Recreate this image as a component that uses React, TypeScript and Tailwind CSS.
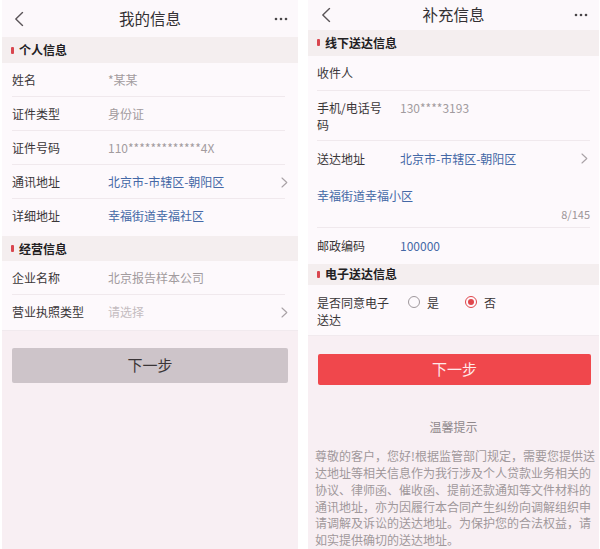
import type { ReactNode } from "react";

const personal = [
  { label: "姓名", value: "*某某", tone: "gray" },
  { label: "证件类型", value: "身份证", tone: "gray" },
  { label: "证件号码", value: "110*************4X", tone: "gray" },
  { label: "通讯地址", value: "北京市-市辖区-朝阳区", tone: "blue", arrow: true },
  { label: "详细地址", value: "幸福街道幸福社区", tone: "blue" },
];

const business = [
  { label: "企业名称", value: "北京报告样本公司", tone: "gray" },
  { label: "营业执照类型", value: "请选择", tone: "placeholder", arrow: true },
];

const toneClass: Record<string, string> = {
  gray: "text-[#a29b9e]",
  blue: "text-[#4468a6]",
  placeholder: "text-[#c4bcc0]",
};

function BackIcon() {
  return (
    <svg width="10" height="15" viewBox="0 0 10 15" fill="none">
      <path d="M8.5 1 L1.8 7.5 L8.5 14" stroke="#5a5558" strokeWidth="1.4" strokeLinecap="round" strokeLinejoin="round" />
    </svg>
  );
}

function MoreIcon() {
  return (
    <svg width="14" height="4" viewBox="0 0 14 4">
      <circle cx="2" cy="2" r="1.3" fill="#4a4649" />
      <circle cx="7" cy="2" r="1.3" fill="#4a4649" />
      <circle cx="12" cy="2" r="1.3" fill="#4a4649" />
    </svg>
  );
}

function Chevron() {
  return (
    <svg width="7" height="11" viewBox="0 0 7 11" fill="none">
      <path d="M1 1 L5.8 5.5 L1 10" stroke="#a9a2a6" strokeWidth="1.1" strokeLinecap="round" strokeLinejoin="round" />
    </svg>
  );
}

function TopBar({ title, height, left, right }: { title: string; height: string; left: string; right: string }) {
  return (
    <div className={`relative flex items-center justify-center bg-[#fcf8fb] ${height}`}>
      <span className={`absolute top-1/2 -translate-y-1/2 ${left}`}>
        <BackIcon />
      </span>
      <span className="text-[15.5px] text-[#333033]">{title}</span>
      <span className={`absolute top-1/2 -translate-y-1/2 ${right}`}>
        <MoreIcon />
      </span>
    </div>
  );
}

function SectionTitle({ children, className }: { children: ReactNode; className: string }) {
  return (
    <div className={`flex items-center gap-[5px] bg-[#f4eeef] ${className}`}>
      <span className="h-[7px] w-[3px] rounded-[1px] bg-[#d9464f]" />
      <span className="text-[12px] font-bold text-[#222022]">{children}</span>
    </div>
  );
}

function InfoRow({ label, value, tone, arrow, divider }: { label: string; value: string; tone: string; arrow?: boolean; divider: boolean }) {
  return (
    <div className="relative flex h-[34px] items-center pl-[10px] pr-[10px]">
      <span className="w-[96px] shrink-0 text-[12px] text-[#3a3638]">{label}</span>
      <span className={`flex-1 text-[12px] ${toneClass[tone]}`}>{value}</span>
      {arrow && <Chevron />}
      {divider && <span className="absolute bottom-0 left-[10px] right-[13px] h-px bg-[#f0e9ed]" />}
    </div>
  );
}

function Radio({ checked, label }: { checked?: boolean; label: string }) {
  return (
    <span className="flex items-center gap-[7px]">
      {checked ? (
        <span className="flex h-[12px] w-[12px] items-center justify-center rounded-full border border-[#e0474c]">
          <span className="h-[6px] w-[6px] rounded-full bg-[#e0474c]" />
        </span>
      ) : (
        <span className="h-[12px] w-[12px] rounded-full border border-[#9f989c]" />
      )}
      <span className="text-[12px] text-[#3a3638]">{label}</span>
    </span>
  );
}

function MyInfo() {
  return (
    <div className="ml-[2px] flex w-[296px] flex-col bg-[#f8eff3]">
      <TopBar title="我的信息" height="h-[37px]" left="left-[12px]" right="right-[10px]" />
      <SectionTitle className="h-[26px] pl-[9px]">个人信息</SectionTitle>
      <div className="bg-[#fdf9fc] pb-[3px]">
        {personal.map((row, i) => (
          <InfoRow key={row.label} {...row} divider={i < personal.length - 1} />
        ))}
      </div>
      <SectionTitle className="h-[25px] pl-[9px]">经营信息</SectionTitle>
      <div className="border-b border-[#f1eaee] bg-[#fdf9fc] pb-px">
        {business.map((row, i) => (
          <InfoRow key={row.label} {...row} divider={i < business.length - 1} />
        ))}
      </div>
      <button className="mx-[10px] mt-[17px] h-[35px] rounded-[2px] bg-[#cdc4c9] text-[15px] text-[#3a3537]">
        下一步
      </button>
    </div>
  );
}

function Supplement() {
  return (
    <div className="flex w-[291px] flex-col bg-[#f8eff3]">
      <TopBar title="补充信息" height="h-[32px]" left="left-[13px]" right="right-[11px]" />
      <SectionTitle className="h-[28px] pl-[9px]">线下送达信息</SectionTitle>

      <div className="bg-[#fdf9fc] px-[9px]">
        <div className="flex h-[35px] items-center border-b border-[#f0e9ed] text-[12px] text-[#3a3638]">收件人</div>

        <div className="flex border-b border-[#f0e9ed] pb-[7px] pt-[8px] text-[12px] leading-[17px]">
          <span className="mr-[9px] w-[74px] shrink-0 text-[#3a3638]">手机/电话号码</span>
          <span className="text-[#a29b9e]">130****3193</span>
        </div>

        <div className="flex h-[36px] items-center text-[12px]">
          <span className="mr-[9px] w-[74px] shrink-0 text-[#3a3638]">送达地址</span>
          <span className="flex-1 text-[#4468a6]">北京市-市辖区-朝阳区</span>
          <span className="mr-[2px]">
            <Chevron />
          </span>
        </div>

        <div className="flex flex-col border-b border-[#f0e9ed] pb-[4px] pt-[10px]">
          <span className="text-[12px] leading-[17px] text-[#4468a6]">幸福街道幸福小区</span>
          <span className="self-end pt-[2px] text-[11px] leading-[17px] text-[#9c9598]">8/145</span>
        </div>

        <div className="flex h-[36px] items-center text-[12px]">
          <span className="mr-[9px] w-[74px] shrink-0 text-[#3a3638]">邮政编码</span>
          <span className="text-[#4468a6]">100000</span>
        </div>
      </div>

      <SectionTitle className="h-[23px] pl-[9px]">电子送达信息</SectionTitle>

      <div className="flex border-b border-[#f1eaee] bg-[#fdf9fc] pb-[7px] pl-[9px] pt-[9px] text-[12px] leading-[17px]">
        <span className="w-[74px] shrink-0 text-[#3a3638]">是否同意电子送达</span>
        <div className="ml-[17px] flex h-[17px] items-center gap-[26px]">
          <Radio label="是" />
          <Radio checked label="否" />
        </div>
      </div>

      <button className="ml-[10px] mr-[8px] mt-[18px] h-[34px] rounded-[2px] bg-[#f0474c] text-[15px] text-[#ffe9ea]">
        下一步
      </button>

      <div className="mt-[33px] text-center text-[12px] leading-[17px] text-[#8f888b]">温馨提示</div>
      <p className="mt-[13px] w-[284px] self-end pr-[1px] text-[12px] leading-[16.8px] text-[#a0989b]">
        尊敬的客户，您好!根据监管部门规定，需要您提供送达地址等相关信息作为我行涉及个人贷款业务相关的协议、律师函、催收函、提前还款通知等文件材料的通讯地址，亦为因履行本合同产生纠纷向调解组织申请调解及诉讼的送达地址。为保护您的合法权益，请如实提供确切的送达地址。
      </p>
    </div>
  );
}

export default function App() {
  return (
    <main className="flex h-[549px] w-[600px] gap-[10px] overflow-hidden bg-white font-['Noto_Sans_CJK_SC','Noto_Sans',sans-serif]">
      <MyInfo />
      <Supplement />
    </main>
  );
}
